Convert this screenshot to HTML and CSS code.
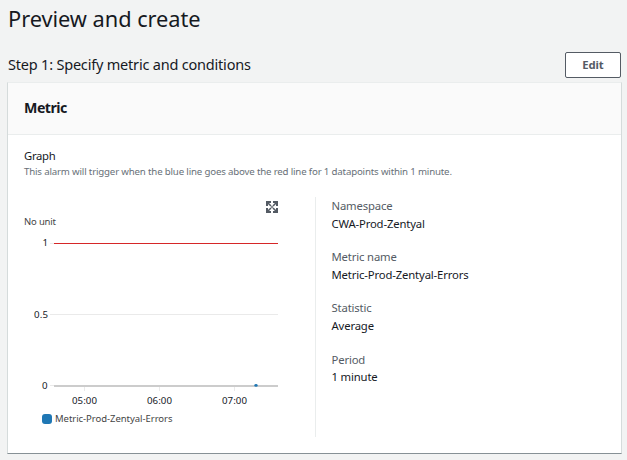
FILE: index.html
```html
<!DOCTYPE html>
<html lang="en">
<head>
<meta charset="utf-8">
<title>Preview and create</title>
<link rel="stylesheet" href="styles.css">
</head>
<body>
<main class="page">
  <h1 class="title">Preview and create</h1>
  <header class="step">
    <h2 class="step-title">Step 1: Specify metric and conditions</h2>
    <button class="edit" type="button">Edit</button>
  </header>
  <section class="card">
    <div class="card-head"><h3 class="card-title">Metric</h3></div>
    <div class="card-body">
      <div class="graph-label">Graph</div>
      <div class="graph-help">This alarm will trigger when the blue line goes above the red line for 1 datapoints within 1 minute.</div>
      <div class="columns">
        <div class="graph">
          <div class="tools">
            <svg class="expand" width="12" height="12" viewBox="0 0 12 12">
              <g fill="none" stroke="#545b64">
                <path stroke-width="2" d="M1 5V1H5M7 1h4V5M11 7v4H7M5 11H1V7"/>
                <path stroke-width="1.6" d="M1 1l4 4M11 1L7 5M11 11L7 7M1 11l4-4"/>
              </g>
              <path fill="#545b64" fill-opacity=".7" d="M5 5h2v2H5z"/>
            </svg>
          </div>
          <svg class="chart" width="262" height="215" viewBox="24 214 262 215">
            <text x="24" y="225" textLength="32" class="unit">No unit</text>
            <g shape-rendering="crispEdges">
              <path class="grid" d="M50 243.5h4M50 314.5h228M50 385.5h4M84.5 387v4M159.5 387v4M234.5 387v4"/>
              <path class="threshold" d="M54 243.5h224"/>
              <path class="axis" d="M54 386h224"/>
            </g>
            <ellipse cx="256" cy="385.4" rx="1.7" ry="1.3" fill="#1f77b4"/>
            <g class="tick">
              <text x="42.5" y="246">1</text>
              <text x="34" y="318" textLength="14">0.5</text>
              <text x="42" y="389">0</text>
              <text x="72" y="404" textLength="25">05:00</text>
              <text x="147" y="404" textLength="25">06:00</text>
              <text x="222" y="404" textLength="25">07:00</text>
            </g>
            <rect x="42" y="414" width="10" height="10" rx="3" fill="#1f77b4"/>
            <text x="55" y="422" textLength="117.5" class="legend">Metric-Prod-Zentyal-Errors</text>
          </svg>
        </div>
        <dl class="details">
          <div><dt>Namespace</dt><dd>CWA-Prod-Zentyal</dd></div>
          <div><dt>Metric name</dt><dd>Metric-Prod-Zentyal-Errors</dd></div>
          <div><dt>Statistic</dt><dd>Average</dd></div>
          <div><dt>Period</dt><dd>1 minute</dd></div>
        </dl>
      </div>
    </div>
  </section>
</main>
</body>
</html>
```
FILE: styles.css
```css
* { box-sizing: border-box; }
body {
  margin: 0;
  background: #f2f3f3;
  color: #16191f;
  font-family: "Noto Sans", "Open Sans", sans-serif;
}
.page { height: 460px; padding: 4px 5px 0 7px; overflow: hidden; }
h1, h2, h3, dl, dd { margin: 0; font-weight: 400; }
.title { padding-left: 1px; font-size: 21.8px; line-height: 30px; letter-spacing: -0.05px; }
.step { display: flex; align-items: center; justify-content: space-between; height: 26px; margin-top: 18px; padding: 0 1px; }
.step-title { padding-bottom: 2px; font-size: 14.5px; line-height: 24px; letter-spacing: -0.2px; }
.edit {
  width: 56px;
  height: 26px;
  padding: 0;
  border: 1px solid #545b64;
  border-radius: 2px;
  background: #fff;
  color: #545b64;
  font: 700 11.3px/24px "Noto Sans", sans-serif;
  letter-spacing: -0.1px;
}
.card {
  height: 372px;
  margin-top: 4px;
  border: 1px solid #d5dbdb;
  border-top-color: #eaeded;
  border-bottom-color: #879196;
  background: #fff;
}
.card-head { height: 52px; padding: 12px 16px; border-bottom: 1px solid #eaeded; background: #fafafa; }
.card-title { font-size: 14.2px; font-weight: 700; line-height: 26px; letter-spacing: -0.5px; }
.card-body { padding: 12px 16px; }
.graph-label { font-size: 11.3px; line-height: 18px; letter-spacing: -0.3px; }
.graph-help { color: #687078; font-size: 9.7px; line-height: 14px; letter-spacing: -0.175px; white-space: nowrap; }
.columns { display: flex; height: 240px; margin-top: 18px; }
.graph { width: 291px; padding-top: 4px; }
.tools { display: flex; height: 13px; padding-left: 242px; }
.chart { display: block; }
.details { height: 240px; padding-left: 15.5px; border-left: 1px solid #eaeded; font-size: 11.3px; line-height: 18px; letter-spacing: -0.15px; }
.details div { height: 51px; }
.details div:last-child { padding-top: 1px; }
.details div:last-child dt { line-height: 17px; }
.details dt { color: #545b64; }
.grid { stroke: #eaeaea; }
.threshold { stroke: #d62728; }
.axis { stroke: #ccc; stroke-width: 2; }
.unit, .legend { fill: #444; font-size: 9.5px; }
.tick { fill: #16191f; font-size: 9.7px; }
```
